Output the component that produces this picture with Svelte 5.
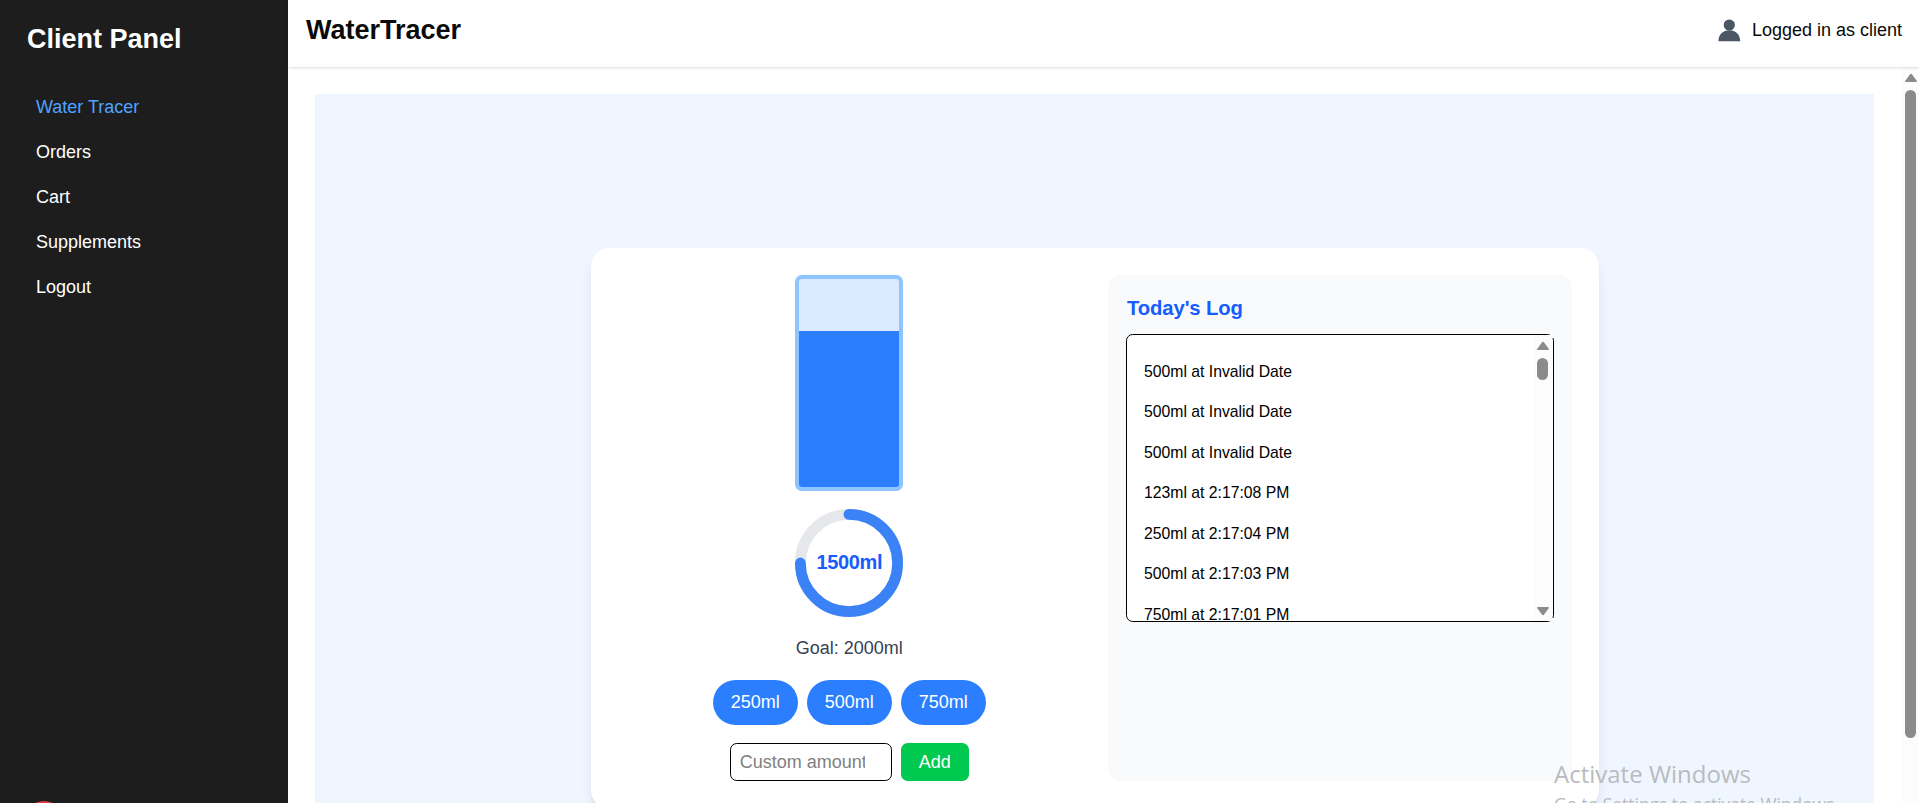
<script>
  const links = ['Water Tracer', 'Orders', 'Cart', 'Supplements', 'Logout'];
  const amounts = [250, 500, 750];
  const logs = [
    '500ml at Invalid Date',
    '500ml at Invalid Date',
    '500ml at Invalid Date',
    '123ml at 2:17:08 PM',
    '250ml at 2:17:04 PM',
    '500ml at 2:17:03 PM',
    '750ml at 2:17:01 PM'
  ];
  const goal = 2000;
  let total = $state(1500);
  let percent = $derived(Math.min(100, (total / goal) * 100));
</script>

{#snippet arrow(down)}
  <svg class="arrow" class:down width="14" height="10" viewBox="0 0 14 10">
    <path d="M7 1.6 L12 8.2 H2 Z" fill="#8b8b8b" stroke="#8b8b8b" stroke-width="1.8" stroke-linejoin="round" />
  </svg>
{/snippet}

<div class="app">
  <aside>
    <h2>Client Panel</h2>
    <nav>
      {#each links as link, i}
        <a href="#{i}" class:active={i === 0}>{link}</a>
      {/each}
    </nav>
    <span class="badge"></span>
  </aside>

  <div class="content">
    <header>
      <h1>WaterTracer</h1>
      <div class="user">
        <svg width="23" height="23" viewBox="0 0 23 23" fill="#4a5565">
          <circle cx="11.3" cy="6" r="5.6" />
          <path d="M0.4 22.3 C0.4 15.5 5 11.2 11.3 11.2 S22.2 15.5 22.2 22.3 Z" />
        </svg>
        <span>Logged in as client</span>
      </div>
    </header>

    <div class="body">
      <main>
        <section class="stage">
          <div class="card">
            <div class="tracker">
              <div class="bottle"><div class="water" style="height: {percent}%"></div></div>
              <div class="ring">
                <svg width="108" height="108" viewBox="0 0 100 100">
                  <circle cx="50" cy="50" r="45" />
                  <circle class="progress" cx="50" cy="50" r="45" pathLength="100" stroke-dasharray="{percent} 100" transform="rotate(-90 50 50)" />
                </svg>
                <strong>{total}ml</strong>
              </div>
              <p>Goal: {goal}ml</p>
              <div class="row">
                {#each amounts as amount}
                  <button class="pill" onclick={() => (total += amount)}>{amount}ml</button>
                {/each}
              </div>
              <div class="row">
                <input type="text" inputmode="numeric" placeholder="Custom amount" />
                <button class="add">Add</button>
              </div>
            </div>

            <div class="log">
              <h3>Today's Log</h3>
              <div class="box">
                <ul>
                  {#each logs as entry}
                    <li>{entry}</li>
                  {/each}
                </ul>
                <div class="bar inner">
                  {@render arrow(false)}
                  <i></i>
                  {@render arrow(true)}
                </div>
              </div>
            </div>
          </div>
        </section>
      </main>
      <div class="bar outer">
        {@render arrow(false)}
        <i></i>
      </div>
    </div>
  </div>

  <div class="watermark">
    <div>Activate Windows</div>
    <small>Go to Settings to activate Windows.</small>
  </div>
</div>

<style>
  :global(body) { margin: 0; overflow: hidden; }
  .app, .app * { box-sizing: border-box; }
  .app {
    position: relative;
    display: flex;
    width: 100%;
    height: 803px;
    overflow: hidden;
    background: #fff;
    color: #0a0a0a;
    font: 18px/27px "Liberation Sans", Arial, sans-serif;
  }
  h1, h2, h3, p, ul { margin: 0; padding: 0; }
  button, input { font: inherit; }

  aside {
    position: relative;
    flex: 0 0 288px;
    padding: 21px 27px;
    background: #1d1d1d;
    color: #fff;
  }
  h2 { font-size: 27px; line-height: 36px; }
  nav { display: flex; flex-direction: column; margin-top: 28px; }
  nav a { padding: 9px; color: inherit; text-decoration: none; }
  nav a.active { color: #51a2ff; }
  .badge {
    position: absolute;
    left: 24px;
    top: 801px;
    width: 40px;
    height: 40px;
    border-radius: 50%;
    background: #e5393d;
  }

  .content { flex: 1; min-width: 0; display: flex; flex-direction: column; }
  header {
    position: relative;
    flex: 0 0 67px;
    display: flex;
    justify-content: space-between;
    align-items: flex-start;
    padding: 12px 17px 0 18px;
    background: #fff;
    box-shadow: 0 1px 3px rgba(0, 0, 0, .1), 0 1px 2px -1px rgba(0, 0, 0, .1);
  }
  h1 { font-size: 27px; line-height: 36px; }
  .user { display: flex; align-items: center; gap: 11px; padding-top: 5px; }
  .user svg { display: block; }

  .body { flex: 1; min-height: 0; display: flex; }
  main { flex: 1; padding: 27px; overflow: hidden; }
  .stage {
    display: flex;
    align-items: center;
    justify-content: center;
    height: 868px;
    background: #eff6ff;
  }
  .card {
    display: grid;
    grid-template-columns: 1fr 1fr;
    gap: 27px;
    width: 1008px;
    padding: 27px;
    border-radius: 18px;
    background: #fff;
    box-shadow: 0 10px 15px -3px rgba(0, 0, 0, .1), 0 4px 6px -4px rgba(0, 0, 0, .1);
  }
  .tracker { display: flex; flex-direction: column; align-items: center; gap: 18px; }
  .bottle {
    display: flex;
    align-items: flex-end;
    width: 108px;
    height: 216px;
    border: 4px solid #8ec5ff;
    border-radius: 6.75px;
    background: #dbeafe;
    overflow: hidden;
  }
  .water { width: 100%; background: #2b7fff; }
  .ring { display: grid; place-items: center; height: 108px; }
  .ring > * { grid-area: 1 / 1; }
  .ring circle { fill: none; stroke: #e5e7eb; stroke-width: 10; }
  .ring .progress { stroke: #3b82f6; stroke-linecap: round; }
  .ring strong { color: #155dfc; font-size: 20px; letter-spacing: -.35px; margin-top: -1px; }
  p { color: #364153; }
  .row { display: flex; gap: 9px; }
  .pill, .add { border: 0; color: #fff; padding: 9px 18px; }
  .pill { border-radius: 23px; background: #2b7fff; }
  .add { padding: 5.5px 18px; border-radius: 6.75px; background: #00c950; }
  input {
    width: 162px;
    height: 38px;
    padding: 4.5px 26px 4.5px 9px;
    border: 1px solid #000;
    border-radius: 6.75px;
    background: #fff;
  }
  input::placeholder { color: #808080; }

  .log { padding: 18px; border-radius: 13.5px; background: #f9fafb; }
  h3 { padding-left: 1px; color: #155dfc; font-size: 20.25px; line-height: 31.5px; letter-spacing: -.1px; }
  .box {
    position: relative;
    display: flex;
    height: 288px;
    margin-top: 9px;
    border: 1px solid #000;
    border-radius: 6.75px;
    background: #fff;
  }
  /* The square scrollbar breaks the rounded border at both right corners. */
  .box::before, .box::after {
    content: '';
    position: absolute;
    right: -1px;
    width: 4px;
    height: 4px;
    background: #fafbfb;
  }
  .box::before { top: -1px; }
  .box::after { bottom: -1px; }
  ul {
    flex: 1;
    padding: 17px 17px 0;
    overflow: hidden;
    list-style: none;
    color: #000;
    font-size: 15.75px;
    line-height: 22.5px;
  }
  li { padding: 9px 0; }

  .bar { display: flex; flex-direction: column; align-items: center; flex: 0 0 18px; background: #fcfcfc; }
  .bar i { width: 11px; border-radius: 6px; background: #8b8b8b; }
  .arrow { display: block; flex: none; }
  .arrow.down { transform: rotate(180deg); margin-top: auto; }
  .inner { padding: 6px 0 5px; margin-right: 1px; }
  .inner i { height: 22px; margin-top: 7px; }
  .outer { padding-top: 6px; padding-left: 1px; }
  .outer i { height: 648px; margin-top: 7px; }

  .watermark {
    position: absolute;
    left: 1554px;
    top: 756px;
    color: #b9bbbe;
    font-family: "Open Sans", "Noto Sans", sans-serif;
    font-weight: 400;
    font-size: 24px;
    line-height: 36px;
    white-space: nowrap;
  }
  .watermark small { display: block; font-size: 17.4px; line-height: 24px; }
</style>
